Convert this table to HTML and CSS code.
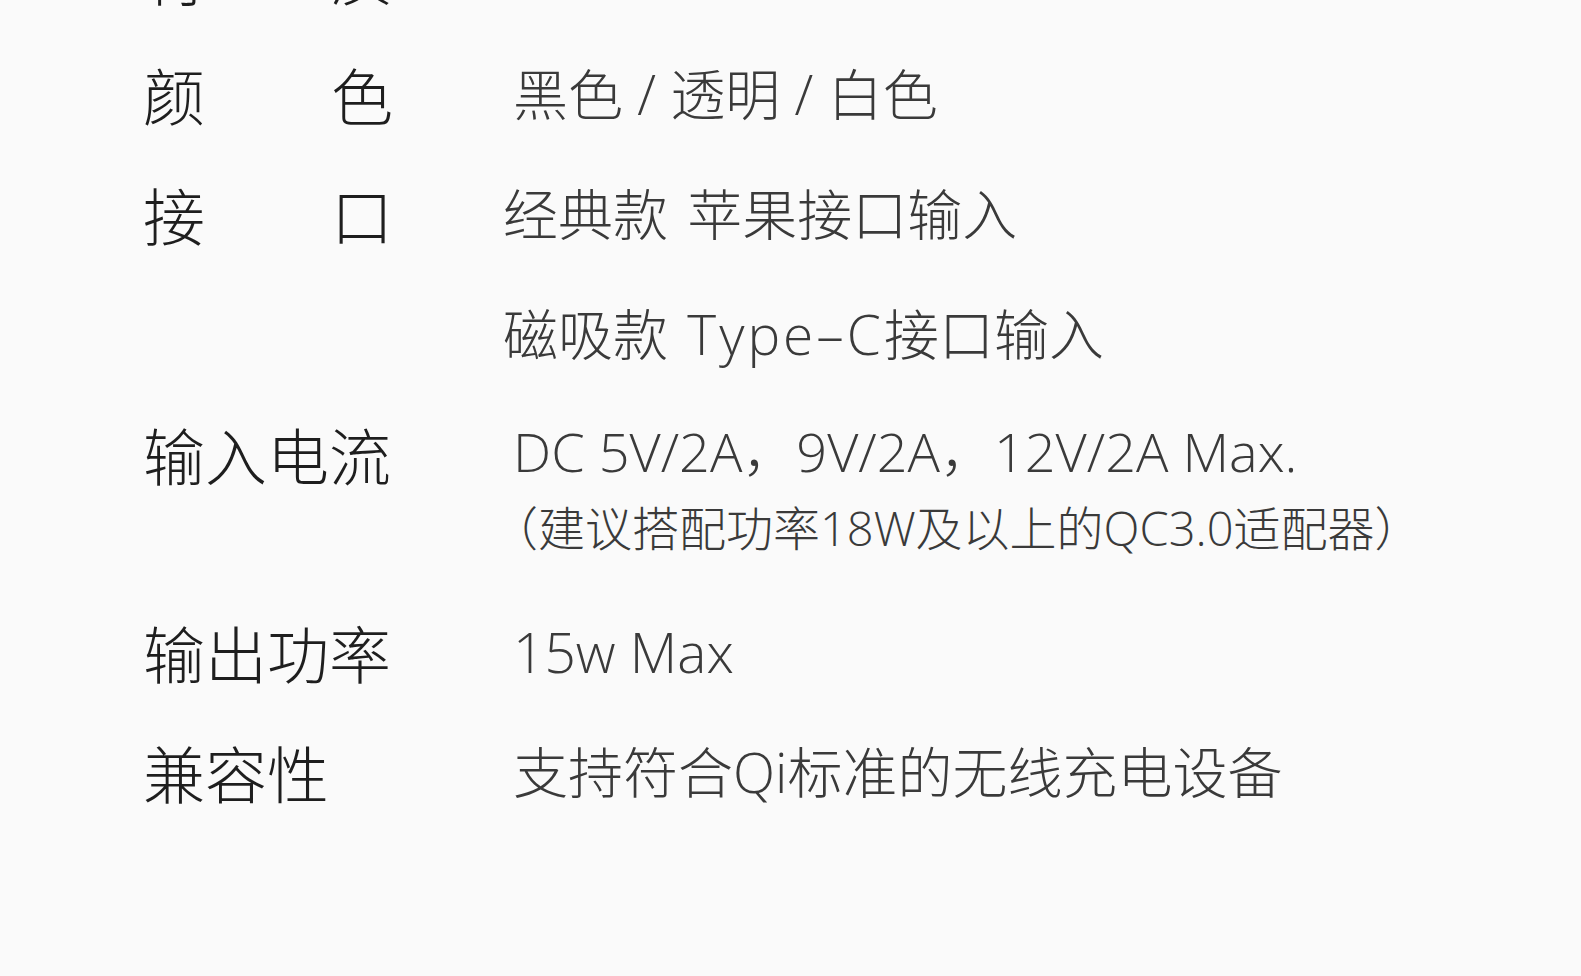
FILE: index.html
```html
<!DOCTYPE html>
<html lang="zh-CN">
<head>
    <meta charset="utf-8">
    <title>产品参数</title>
    <link rel="stylesheet" href="styles.css">
</head>
<body>
    <div class="specs">
        <div class="spec-row">
            <div class="spec-label spread">材质</div>
            <div class="spec-value">
                <div class="line">PC + ABS 阻燃材料</div>
            </div>
        </div>
        <div class="spec-row">
            <div class="spec-label spread">颜色</div>
            <div class="spec-value">
                <div class="line">黑色 / 透明 / 白色</div>
            </div>
        </div>
        <div class="spec-row">
            <div class="spec-label spread">接口</div>
            <div class="spec-value shift">
                <div class="line spaced">经典款 苹果接口输入</div>
                <div class="line spaced">磁吸款 <span class="wide">Type–C</span>接口输入</div>
            </div>
        </div>
        <div class="spec-row">
            <div class="spec-label">输入电流</div>
            <div class="spec-value">
                <div class="line tight">DC 5V/2A，9V/2A，12V/2A Max.</div>
                <div class="note">（建议搭配功率18W及以上的QC3.0适配器）</div>
            </div>
        </div>
        <div class="spec-row">
            <div class="spec-label">输出功率</div>
            <div class="spec-value">
                <div class="line">15w Max</div>
            </div>
        </div>
        <div class="spec-row">
            <div class="spec-label">兼容性</div>
            <div class="spec-value">
                <div class="line">支持符合Qi标准的无线充电设备</div>
            </div>
        </div>
    </div>
</body>
</html>
```

FILE: styles.css
```css
html, body {
  margin: 0;
  padding: 0;
  height: 100%;
  overflow: hidden;
  background-color: #fafafa;
}

body {
  font-family: "Noto Sans CJK SC", "Noto Sans", sans-serif;
}

.specs {
  margin-top: -86px;
  padding-left: 143px;
}

.spec-row {
  display: flex;
  align-items: flex-start;
}

.spec-label {
  width: 250px;
  flex-shrink: 0;
  font-size: 62px;
  line-height: 120px;
  color: #1e1e1e;
  font-weight: 300;
  white-space: nowrap;
}

.spec-label.spread {
  text-align-last: justify;
}

.spec-value {
  margin-left: 120px;
  color: #3a3a3a;
  font-family: "Open Sans", "Noto Sans CJK SC", sans-serif;
  font-weight: 300;
}

.spec-value.shift {
  margin-left: 110px;
}

.line {
  font-size: 55px;
  line-height: 120px;
  white-space: nowrap;
}

.line.spaced {
  word-spacing: 5px;
}

.wide {
  letter-spacing: 3px;
}

.line.tight {
  font-size: 54px;
  line-height: 114px;
}

.note {
  font-size: 47px;
  line-height: 40px;
  margin-left: -22px;
  margin-bottom: 44px;
  white-space: nowrap;
}
```
